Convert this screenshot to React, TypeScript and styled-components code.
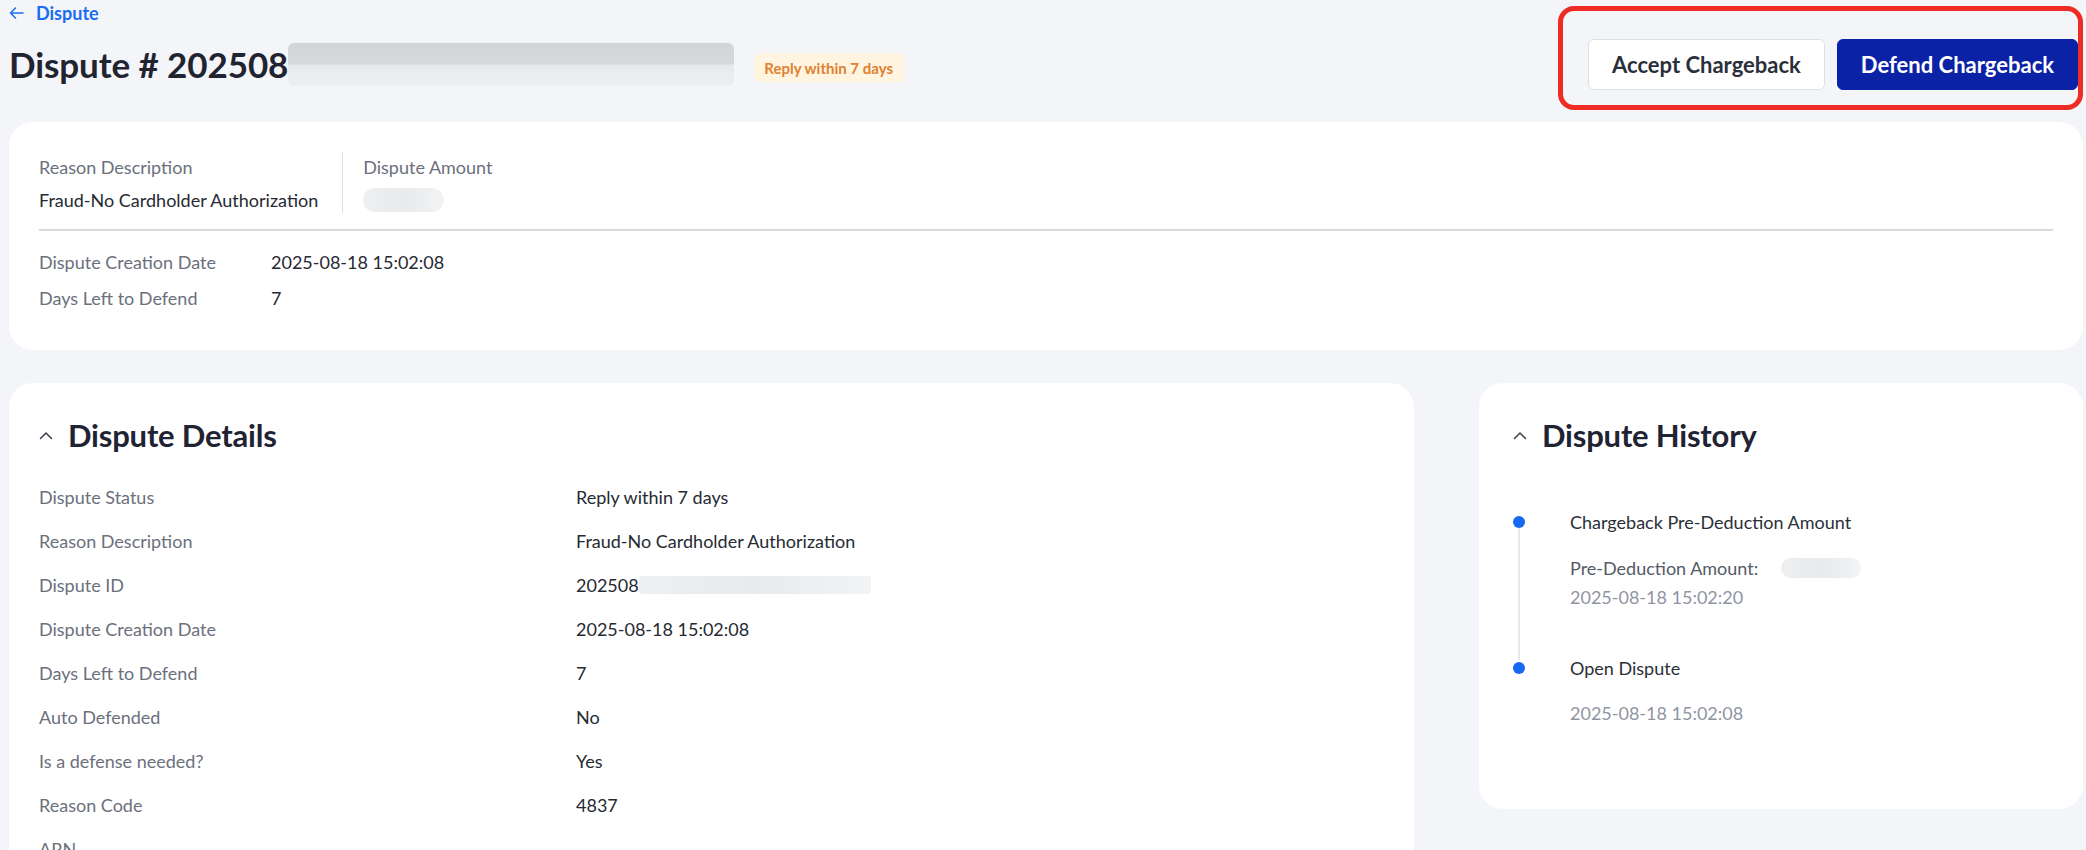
import React from "react";
import styled, { createGlobalStyle } from "styled-components";

const GlobalStyle = createGlobalStyle`
  html, body { margin: 0; padding: 0; background: #f4f5f9; overflow: hidden; }
  body { font-family: Lato, "Open Sans", "Liberation Sans", sans-serif; color: #262a33; }
  * { box-sizing: border-box; }
`;

const Page = styled.div`
  width: 2086px;
  height: 850px;
  padding: 0 3px 0 9px;
  overflow: hidden;
`;

const Header = styled.header`
  display: flex;
  justify-content: space-between;
  align-items: flex-start;
  margin-bottom: 12px;
`;

const HeaderLeft = styled.div`
  display: flex;
  flex-direction: column;
  gap: 16px;
`;

const BackLink = styled.a`
  display: flex;
  align-items: center;
  gap: 12px;
  height: 26px;
  color: #1a6cf0;
  font-size: 18px;
  font-weight: 700;
  text-decoration: none;
  cursor: pointer;
`;

const TitleRow = styled.div`
  display: flex;
  align-items: center;
  height: 44px;
`;

const Title = styled.h1`
  margin: 0;
  font-size: 35px;
  font-weight: 700;
  line-height: 44px;
  color: #1f2430;
  letter-spacing: -0.1px;
`;

const Redacted = styled.span<{ $w: number; $h: number; $radius?: number; $tone?: "dark" | "light" }>`
  display: inline-block;
  width: ${(p) => p.$w}px;
  height: ${(p) => p.$h}px;
  border-radius: ${(p) => p.$radius ?? 6}px;
  vertical-align: middle;
  background: ${(p) =>
    p.$tone === "dark"
      ? "linear-gradient(180deg, #d3d4d8 0%, #d7d8dc 48%, #e8e9ec 52%, #eeeff1 100%)"
      : "linear-gradient(90deg, #eeeff1 0%, #e9eaec 50%, #f2f3f4 100%)"};
`;

const Badge = styled.span`
  margin-left: 20px;
  margin-top: 7px;
  padding: 0 12px 0 10px;
  height: 29px;
  display: inline-flex;
  align-items: center;
  border-radius: 6px;
  background: #fff4e0;
  color: #df8130;
  font-size: 15px;
  font-weight: 700;
`;

const ActionBox = styled.div`
  margin-top: 6px;
  height: 104px;
  border: 5px solid #ef2b26;
  border-radius: 16px;
  padding: 28px 0 15px 25px;
  display: flex;
  gap: 12px;
  overflow: hidden;
`;

const Button = styled.button<{ $primary?: boolean }>`
  height: 51px;
  padding: 0 23px;
  border-radius: 6px;
  font-family: inherit;
  font-size: 22px;
  font-weight: 700;
  cursor: pointer;
  border: 1px solid ${(p) => (p.$primary ? "#0b22a6" : "#dcdfe6")};
  background: ${(p) => (p.$primary ? "#0b22a6" : "#ffffff")};
  color: ${(p) => (p.$primary ? "#ffffff" : "#2b2f3a")};
`;

const Card = styled.section<{ $pad: string; $height?: number }>`
  background: #ffffff;
  border-radius: 24px;
  padding: ${(p) => p.$pad};
  ${(p) => (p.$height ? `height: ${p.$height}px;` : "")}
`;

const SummaryTop = styled.div`
  display: flex;
  align-items: stretch;
  height: 61px;
`;

const SummaryItem = styled.div<{ $divider?: boolean }>`
  display: flex;
  flex-direction: column;
  gap: 9px;
  padding-top: 3px;
  ${(p) =>
    p.$divider
      ? "border-left: 1px solid #dcdfe4; padding-left: 20px;"
      : "padding-right: 24px;"}
`;

const Label = styled.span`
  font-size: 18px;
  line-height: 24px;
  color: #6b707c;
`;

const Value = styled.span`
  font-size: 18px;
  line-height: 24px;
  color: #262a33;
  display: flex;
  align-items: center;
`;

const Rule = styled.hr`
  border: none;
  border-top: 2px solid #d7dade;
  margin: 16px 0 19px;
`;

const KVList = styled.div<{ $labelWidth: number; $rowGap: number }>`
  display: grid;
  grid-template-columns: ${(p) => p.$labelWidth}px 1fr;
  row-gap: ${(p) => p.$rowGap}px;
`;

const Columns = styled.div`
  display: flex;
  gap: 65px;
  align-items: flex-start;
`;

const SectionHeader = styled.h2`
  margin: 0;
  display: flex;
  align-items: center;
  gap: 15px;
  height: 40px;
  font-size: 31px;
  font-weight: 700;
  color: #1f2333;
  letter-spacing: -0.2px;
`;

const Timeline = styled.div`
  margin-top: 55px;
  display: flex;
  flex-direction: column;
`;

const TLItem = styled.div<{ $last?: boolean }>`
  display: grid;
  grid-template-columns: 57px 1fr;
  min-height: ${(p) => (p.$last ? 0 : 146)}px;
`;

const Rail = styled.div`
  display: flex;
  flex-direction: column;
  align-items: center;
  width: 12px;
  padding-top: 6px;
`;

const Dot = styled.span`
  width: 12px;
  height: 12px;
  border-radius: 50%;
  background: #1769f2;
  flex: none;
`;

const RailLine = styled.span`
  width: 2px;
  flex: 1;
  background: #e6e8ec;
  margin-bottom: -4px;
`;

const TLBody = styled.div`
  display: flex;
  flex-direction: column;
`;

const TLTitle = styled.span`
  font-size: 18px;
  line-height: 24px;
  color: #2b2f38;
`;

const TLSub = styled.span`
  margin-top: 22px;
  font-size: 18px;
  line-height: 24px;
  color: #555a66;
  display: flex;
  align-items: center;
  gap: 23px;
`;

const TLDate = styled.span<{ $gap: number }>`
  margin-top: ${(p) => p.$gap}px;
  font-size: 18px;
  line-height: 24px;
  color: #8f95a1;
`;

const Spacer = styled.div<{ $h: number }>`
  height: ${(p) => p.$h}px;
`;

const Chevron = () => (
  <svg width="14" height="9" viewBox="0 0 14 9" fill="none">
    <polyline points="1.5,7.5 7,2 12.5,7.5" stroke="#3a3f4b" strokeWidth="1.5" strokeLinecap="round" strokeLinejoin="round" />
  </svg>
);

const BackArrow = () => (
  <svg width="15" height="12" viewBox="0 0 15 12" fill="none">
    <path d="M14 6H1.5M6.5 1L1.5 6L6.5 11" stroke="#1a6cf0" strokeWidth="1.5" strokeLinecap="round" strokeLinejoin="round" />
  </svg>
);

const details: [string, React.ReactNode][] = [
  ["Dispute Status", "Reply within 7 days"],
  ["Reason Description", "Fraud-No Cardholder Authorization"],
  [
    "Dispute ID",
    <>
      202508
      <Redacted $w={232} $h={18} $radius={3} $tone="light" />
    </>,
  ],
  ["Dispute Creation Date", "2025-08-18 15:02:08"],
  ["Days Left to Defend", "7"],
  ["Auto Defended", "No"],
  ["Is a defense needed?", "Yes"],
  ["Reason Code", "4837"],
  ["ARN", ""],
  ["Dispute Reason", ""],
];

export default function App() {
  return (
    <>
      <GlobalStyle />
      <Page>
        <Header>
          <HeaderLeft>
            <BackLink>
              <BackArrow />
              Dispute
            </BackLink>
            <TitleRow>
              <Title>Dispute # 202508</Title>
              <Redacted $w={446} $h={43} $tone="dark" />
              <Badge>Reply within 7 days</Badge>
            </TitleRow>
          </HeaderLeft>
          <ActionBox>
            <Button>Accept Chargeback</Button>
            <Button $primary>Defend Chargeback</Button>
          </ActionBox>
        </Header>

        <Card $pad="30px 30px 40px 30px" $height={228} style={{ marginBottom: 33 }}>
          <SummaryTop>
            <SummaryItem>
              <Label>Reason Description</Label>
              <Value>Fraud-No Cardholder Authorization</Value>
            </SummaryItem>
            <SummaryItem $divider>
              <Label>Dispute Amount</Label>
              <Value>
                <Redacted $w={81} $h={24} $radius={12} $tone="light" />
              </Value>
            </SummaryItem>
          </SummaryTop>
          <Rule />
          <KVList $labelWidth={232} $rowGap={12}>
            <Label>Dispute Creation Date</Label>
            <Value>2025-08-18 15:02:08</Value>
            <Label>Days Left to Defend</Label>
            <Value>7</Value>
          </KVList>
        </Card>

        <Columns>
          <Card $pad="32px 30px 40px 30px" style={{ flex: "0 0 1405px" }}>
            <SectionHeader>
              <Chevron />
              Dispute Details
            </SectionHeader>
            <Spacer $h={30} />
            <KVList $labelWidth={537} $rowGap={20}>
              {details.map(([k, v]) => (
                <React.Fragment key={k}>
                  <Label>{k}</Label>
                  <Value>{v}</Value>
                </React.Fragment>
              ))}
            </KVList>
          </Card>

          <Card $pad="32px 30px 0 34px" $height={426} style={{ flex: 1 }}>
            <SectionHeader>
              <Chevron />
              Dispute History
            </SectionHeader>
            <Timeline>
              <TLItem>
                <Rail>
                  <Dot />
                  <RailLine />
                </Rail>
                <TLBody>
                  <TLTitle>Chargeback Pre-Deduction Amount</TLTitle>
                  <TLSub>
                    Pre-Deduction Amount:
                    <Redacted $w={80} $h={20} $radius={10} $tone="light" />
                  </TLSub>
                  <TLDate $gap={5}>2025-08-18 15:02:20</TLDate>
                </TLBody>
              </TLItem>
              <TLItem $last>
                <Rail>
                  <Dot />
                </Rail>
                <TLBody>
                  <TLTitle>Open Dispute</TLTitle>
                  <TLDate $gap={21}>2025-08-18 15:02:08</TLDate>
                </TLBody>
              </TLItem>
            </Timeline>
          </Card>
        </Columns>
      </Page>
    </>
  );
}
